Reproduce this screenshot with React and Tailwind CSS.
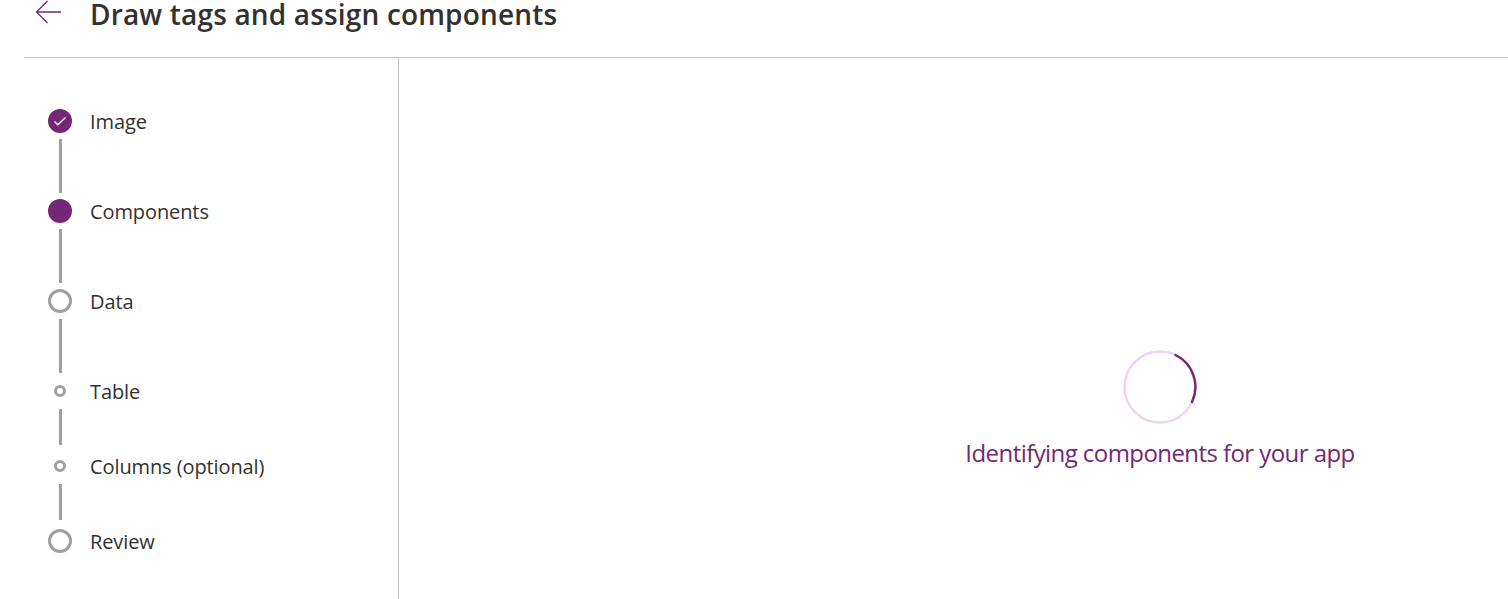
import React from 'react';

const Connector = ({ short }) => (
    <div className={`ml-[59px] w-[3px] bg-[#a19f9d] mt-[6px] ${short ? 'h-[36px] mb-[9px]' : 'h-[54px] mb-[6px]'}`} />
);

const Step = ({ label, kind }) => (
    <div className="flex items-center h-[24px] pl-[48px]">
        <div className="w-[24px] h-[24px] flex items-center justify-center shrink-0">
            {kind === 'done' && (
                <div className="w-[24px] h-[24px] rounded-full bg-[#742774] flex items-center justify-center">
                    <svg width="14" height="14" viewBox="0 0 14 14" fill="none">
                        <path d="M1.5 7.5 L4.8 10.8 L12.5 3.5" stroke="#ffffff" strokeWidth="1.3" />
                    </svg>
                </div>
            )}
            {kind === 'current' && <div className="w-[24px] h-[24px] rounded-full bg-[#742774]" />}
            {kind === 'todo' && <div className="w-[24px] h-[24px] rounded-full border-[3px] border-[#a19f9d]" />}
            {kind === 'sub' && <div className="w-[12px] h-[12px] rounded-full border-[3px] border-[#a19f9d]" />}
        </div>
        <span className="ml-[18px] mt-[2px] text-[20px] leading-[24px] text-[#323130] whitespace-nowrap tracking-[-0.1px]">{label}</span>
    </div>
);

const App = () => {
    return (
        <div className="h-[599px] w-[1508px] overflow-hidden bg-white font-['Open_Sans',sans-serif]">
            <div className="h-[58px] ml-[24px] border-b border-[#c8c6c4] flex items-start">
                <svg className="ml-[11px]" width="27" height="24" viewBox="0 0 27 24" fill="none">
                    <path d="M12.5 1 L1.5 12 L12.5 23 M1.5 12 H26" stroke="#742774" strokeWidth="1.3" />
                </svg>
                <h1 className="ml-[28px] text-[28px] leading-[28px] font-semibold text-[#323130] whitespace-nowrap tracking-[0.17px]">
                    Draw tags and assign components
                </h1>
            </div>
            <div className="flex h-[541px]">
                <div className="w-[399px] border-r border-[#c8c6c4] pt-[51px] shrink-0">
                    <Step label="Image" kind="done" />
                    <Connector />
                    <Step label="Components" kind="current" />
                    <Connector />
                    <Step label="Data" kind="todo" />
                    <Connector />
                    <Step label="Table" kind="sub" />
                    <Connector short />
                    <Step label="Columns (optional)" kind="sub" />
                    <Connector short />
                    <Step label="Review" kind="todo" />
                </div>
                <div className="flex-1 flex flex-col items-center pt-[292px] pl-[413px]">
                    <svg width="74" height="74" viewBox="0 0 74 74" fill="none">
                        <circle cx="37" cy="37" r="35.5" stroke="#efd3ef" strokeWidth="2.4" />
                        <path d="M52.5 5 A35.5 35.5 0 0 1 69 52" stroke="#742774" strokeWidth="2.4" strokeLinecap="round" />
                    </svg>
                    <div className="mt-[13px] text-[24px] leading-[32px] text-[#742774] whitespace-nowrap tracking-[-0.57px]">
                        Identifying components for your app
                    </div>
                </div>
            </div>
        </div>
    );
};

export default App;
